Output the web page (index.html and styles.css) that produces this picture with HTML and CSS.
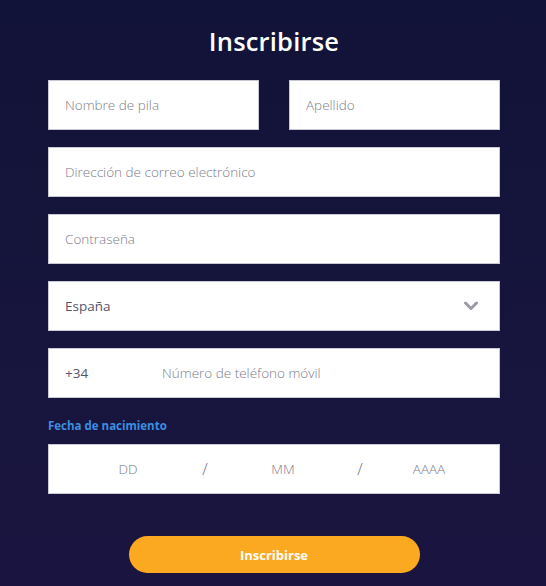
FILE: index.html
```html
<!DOCTYPE html>
<html lang="es">
<head>
<meta charset="utf-8">
<title>Inscribirse</title>
<link rel="stylesheet" href="styles.css">
</head>
<body>
<main class="page">
  <h1 class="title">Inscribirse</h1>
  <form class="form">
    <div class="row two">
      <div class="field"><span class="ph">Nombre de pila</span></div>
      <div class="field"><span class="ph">Apellido</span></div>
    </div>
    <div class="field"><span class="ph">Dirección de correo electrónico</span></div>
    <div class="field"><span class="ph">Contraseña</span></div>
    <div class="field select">
      <span class="val">España</span>
      <svg class="chev" width="14" height="10" viewBox="0 0 14 10"><path d="M1.5 2 L7 7.5 L12.5 2" fill="none" stroke="#9a9aa6" stroke-width="3" stroke-linecap="round" stroke-linejoin="round"/></svg>
    </div>
    <div class="field phone">
      <span class="val code">+34</span>
      <span class="ph">Número de teléfono móvil</span>
    </div>
    <div class="label">Fecha de nacimiento</div>
    <div class="field date">
      <span class="ph">DD</span>
      <span class="sep">/</span>
      <span class="ph">MM</span>
      <span class="sep">/</span>
      <span class="ph">AAAA</span>
    </div>
    <div class="actions">
      <button type="button" class="btn">Inscribirse</button>
    </div>
  </form>
</main>
</body>
</html>
```
FILE: styles.css
```css
* { box-sizing: border-box; }
html, body { margin: 0; padding: 0; }
body {
  background: linear-gradient(#121338, #1a1540);
  min-height: 586px;
  font-family: "Open Sans", "DejaVu Sans", sans-serif;
}
.page {
  padding: 24px 46px 0 48px;
}
.title {
  margin: 0 0 22px;
  text-align: center;
  color: #fff;
  font-size: 25.5px;
  font-weight: 600;
  line-height: 34px;
  letter-spacing: 0.2px;
}
.form {
  display: flex;
  flex-direction: column;
  gap: 17px;
}
.row.two {
  display: grid;
  grid-template-columns: 211px 211px;
  justify-content: space-between;
}
.field {
  height: 50px;
  background: #fff;
  border: 1px solid #c9c9d3;
  display: flex;
  align-items: center;
  padding: 0 16px;
  font-size: 13.5px;
}
.ph { color: #7c7c8c; font-weight: 300; }
.val { color: #55556a; font-weight: 400; }
.select { justify-content: space-between; padding-right: 21px; }
.phone .code { width: 97px; }
.label {
  color: #3d8ee0;
  font-size: 11.5px;
  font-weight: 700;
  margin: 4px 0 -6px;
  line-height: 14px;
}
.date {
  display: grid;
  grid-template-columns: 118px 36px 120px 34px 104px;
  padding: 0 20px;
  text-align: center;
}
.date .sep { color: #6b6b7a; font-size: 16px; font-weight: 300; }
.actions {
  display: flex;
  justify-content: center;
  margin-top: 25px;
}
.btn {
  width: 291px;
  height: 37px;
  border: none;
  border-radius: 19px;
  background: #fba920;
  color: #fff;
  font-family: inherit;
  font-weight: 700;
  font-size: 13px;
}
```
